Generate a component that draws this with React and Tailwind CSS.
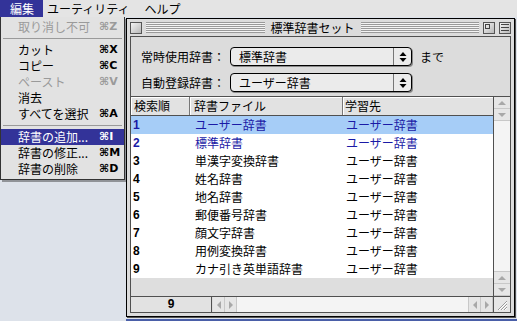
import React from "react";

const JP = "font-['Noto_Sans_CJK_JP','Noto_Sans_CJK_SC',sans-serif]";

function MenuItem({ label, sc, disabled, active }) {
  return (
    <div
      className={
        "flex h-[16px] items-center pl-[17px] " +
        (active ? "bg-[#333399] text-white" : disabled ? "text-[#9a9a9a]" : "text-black")
      }
    >
      <span className="flex-1 leading-[16px]">{label}</span>
      <span className="w-[25px] font-['DejaVu_Sans',sans-serif] text-[11px] font-bold leading-[16px]">
        {sc ? "⌘" + sc : ""}
      </span>
    </div>
  );
}

function Sep() {
  return (
    <div className="flex h-[7px] items-center px-[2px]">
      <div className="h-px w-full bg-[#9a9a9a]" />
    </div>
  );
}

function UpDown() {
  return (
    <svg width="8" height="12" viewBox="0 0 8 12">
      <path d="M4 1 L7.5 5 L0.5 5 Z" fill="#000" />
      <path d="M0.5 7 L7.5 7 L4 11 Z" fill="#000" />
    </svg>
  );
}

function Popup({ text }) {
  return (
    <div className="flex h-[19px] w-[182px] rounded-[4px] border border-black bg-[#ebebeb] shadow-[1px_1px_0_#8a8a8a]">
      <div className="flex-1 pl-[8px] text-[12px] leading-[17px]">{text}</div>
      <div className="flex w-[18px] items-center justify-center border-l border-[#777]">
        <UpDown />
      </div>
    </div>
  );
}

function Tri({ dir }) {
  const d =
    dir === "up"
      ? "M4 1 L8 5 L0 5 Z"
      : dir === "down"
      ? "M0 1 L8 1 L4 5 Z"
      : dir === "left"
      ? "M5 0 L5 8 L1 4 Z"
      : "M1 0 L5 4 L1 8 Z";
  const vert = dir === "up" || dir === "down";
  return (
    <svg width={vert ? 8 : 6} height={vert ? 6 : 8} viewBox={vert ? "0 0 8 6" : "0 0 6 8"}>
      <path d={d} fill="#a8a8a8" />
    </svg>
  );
}

function VArrow({ dir }) {
  return (
    <div className="flex h-[12px] items-center justify-center border-b border-[#c8c8c8] bg-[#e6e6e6]">
      <Tri dir={dir} />
    </div>
  );
}

function HArrow({ dir }) {
  return (
    <div className="flex w-[12px] items-center justify-center border-r border-[#c8c8c8] bg-[#e6e6e6]">
      <Tri dir={dir} />
    </div>
  );
}

const rows = [
  ["1", "ユーザー辞書", "ユーザー辞書"],
  ["2", "標準辞書", "ユーザー辞書"],
  ["3", "単漢字変換辞書", "ユーザー辞書"],
  ["4", "姓名辞書", "ユーザー辞書"],
  ["5", "地名辞書", "ユーザー辞書"],
  ["6", "郵便番号辞書", "ユーザー辞書"],
  ["7", "顔文字辞書", "ユーザー辞書"],
  ["8", "用例変換辞書", "ユーザー辞書"],
  ["9", "カナ引き英単語辞書", "ユーザー辞書"],
];

function Box({ children }) {
  return (
    <div className="flex h-[12px] w-[12px] items-center justify-center border border-[#555] bg-[linear-gradient(135deg,#f4f4f4,#b8b8b8)]">
      {children}
    </div>
  );
}

export default function App() {
  return (
    <div className={"relative h-[321px] w-[517px] overflow-hidden bg-[#dde2ea] text-[12px] text-black " + JP}>
      {/* menu bar */}
      <div className="flex h-[17px] bg-[#e4e4e4] leading-[17px]">
        <div className="w-[43px] bg-[#333399] pl-[10px] text-white">編集</div>
        <div className="ml-[4px]">ユーティリティ</div>
        <div className="ml-[15px]">ヘルプ</div>
      </div>

      {/* window */}
      <div className="absolute left-[126px] top-[18px] flex h-[299px] w-[389px] flex-col border border-black bg-[#dcdcdc] shadow-[1px_1px_0_#555]">
        {/* title bar */}
        <div className="flex h-[17px] items-center gap-[4px] px-[3px]">
          <Box />
          <div className="h-[11px] flex-1 bg-[repeating-linear-gradient(to_bottom,#9a9a9a_0px,#9a9a9a_1px,#f4f4f4_1px,#f4f4f4_2px)]" />
          <div className="px-[2px] leading-[17px]">標準辞書セット</div>
          <div className="h-[11px] flex-1 bg-[repeating-linear-gradient(to_bottom,#9a9a9a_0px,#9a9a9a_1px,#f4f4f4_1px,#f4f4f4_2px)]" />
          <Box>
            <div className="ml-[-3px] mt-[-3px] h-[5px] w-[5px] border border-[#444]" />
          </Box>
          <Box>
            <div className="flex w-[8px] flex-col gap-[2px]">
              <div className="h-px bg-[#444]" />
              <div className="h-px bg-[#444]" />
              <div className="h-px bg-[#444]" />
            </div>
          </Box>
        </div>

        {/* content */}
        <div className="mx-[3px] mb-[3px] flex flex-1 flex-col border border-[#505050] bg-[#dcdcdc]">
          <div className="flex flex-col gap-[7px] pl-[10px] pt-[10px]">
            <div className="flex items-center">
              <div className="w-[89px]">常時使用辞書：</div>
              <Popup text="標準辞書" />
              <div className="ml-[8px]">まで</div>
            </div>
            <div className="flex items-center">
              <div className="w-[89px]">自動登録辞書：</div>
              <Popup text="ユーザー辞書" />
            </div>
          </div>

          {/* table */}
          <div className="mt-[4px] flex flex-1 border-t border-[#505050]">
            <div className="flex flex-1 flex-col">
              <div className="flex h-[19px] border-b border-[#505050] bg-[#e2e2e2] leading-[18px]">
                <div className="w-[59px] border-r border-[#777] pl-[3px] shadow-[inset_1px_1px_0_#fff]">検索順</div>
                <div className="w-[153px] border-r border-[#777] pl-[4px] shadow-[inset_1px_1px_0_#fff]">辞書ファイル</div>
                <div className="flex-1 pl-[2px] shadow-[inset_1px_1px_0_#fff]">学習先</div>
              </div>
              <div className="flex flex-col bg-white">
                {rows.map((r, i) => (
                  <div
                    key={r[0]}
                    className={
                      "flex h-[18px] items-center leading-[18px] " +
                      (i === 0 ? "bg-[#a6cdf7] text-[#1a1aa6]" : i === 1 ? "text-[#1a1aa6]" : "text-black")
                    }
                  >
                    <div className="w-[59px] pl-[2px] font-['Liberation_Sans',sans-serif] text-[12px] font-bold">{r[0]}</div>
                    <div className="w-[153px] pl-[5px]">{r[1]}</div>
                    <div className="flex-1 pl-[3px]">{r[2]}</div>
                  </div>
                ))}
              </div>
              <div className="flex-1 bg-[#dedede]" />
            </div>
            {/* vertical scrollbar */}
            <div className="flex w-[17px] flex-col border-l border-[#505050] bg-[#f4f4f4]">
              <VArrow dir="up" />
              <VArrow dir="down" />
              <div className="flex-1" />
              <div className="border-t border-[#c8c8c8]">
                <VArrow dir="up" />
              </div>
              <VArrow dir="down" />
            </div>
          </div>

          {/* horizontal scrollbar */}
          <div className="flex h-[16px] border-t border-[#505050]">
            <div className="w-[81px] border-r border-[#505050] bg-[#e2e2e2] text-center font-['Liberation_Sans',sans-serif] text-[12px] font-bold leading-[15px]">
              9
            </div>
            <div className="ml-px flex">
              <HArrow dir="left" />
              <HArrow dir="right" />
            </div>
            <div className="flex-1 bg-[#f4f4f4]" />
            <div className="flex border-l border-[#c8c8c8]">
              <HArrow dir="left" />
              <HArrow dir="right" />
            </div>
            <div className="flex w-[17px] items-center justify-center border-l border-[#505050] bg-[#e6e6e6]">
              <svg width="12" height="12" viewBox="0 0 12 12">
                <path d="M2 11 L11 2 M5 11 L11 5 M8 11 L11 8" stroke="#9a9a9a" strokeWidth="1" />
                <path d="M3 11 L11 3 M6 11 L11 6 M9 11 L11 9" stroke="#fff" strokeWidth="1" />
              </svg>
            </div>
          </div>
        </div>
      </div>

      {/* desktop strip below window */}
      <div className="absolute left-[126px] top-[319px] h-[2px] w-[391px] bg-[#4a5fa8]" />

      {/* dropdown menu */}
      <div className="absolute left-0 top-[17px] w-[125px] border-x border-b border-[#333] bg-[#e2e2e2] pb-[2px] pt-[2px] shadow-[2px_2px_0_rgba(0,0,0,0.35)]">
        <MenuItem label="取り消し不可" sc="Z" disabled />
        <Sep />
        <MenuItem label="カット" sc="X" />
        <MenuItem label="コピー" sc="C" />
        <MenuItem label="ペースト" sc="V" disabled />
        <MenuItem label="消去" sc="" />
        <MenuItem label="すべてを選択" sc="A" />
        <Sep />
        <MenuItem label="辞書の追加..." sc="I" active />
        <MenuItem label="辞書の修正..." sc="M" />
        <MenuItem label="辞書の削除" sc="D" />
      </div>
    </div>
  );
}
